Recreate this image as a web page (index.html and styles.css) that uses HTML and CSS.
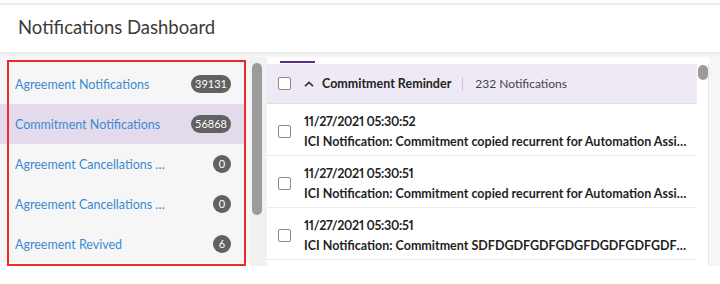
FILE: index.html
```html
<!DOCTYPE html>
<html lang="en">
<head>
  <meta charset="UTF-8" />
  <title>Notifications Dashboard</title>
  <link rel="stylesheet" href="styles.css">
</head>
<body>
  <div class="topline"></div>
  <header class="page-header">
    <h1>Notifications Dashboard</h1>
  </header>
  <div class="divider"></div>

  <main class="main">
    <aside class="side">
      <ul class="cat-list">
        <li class="cat"><span class="cat-name">Agreement Notifications</span><span class="badge wide">39131</span></li>
        <li class="cat active"><span class="cat-name">Commitment Notifications</span><span class="badge wide">56868</span></li>
        <li class="cat"><span class="cat-name">Agreement Cancellations Notifications</span><span class="badge">0</span></li>
        <li class="cat"><span class="cat-name">Agreement Cancellations Reminder</span><span class="badge">0</span></li>
        <li class="cat"><span class="cat-name">Agreement Revived</span><span class="badge">6</span></li>
      </ul>
      <div class="highlight"></div>
    </aside>

    <div class="side-scroll"><div class="thumb side-thumb"></div></div>

    <section class="content">
      <div class="tab-mark"></div>
      <div class="list-wrap">
        <div class="list">
          <div class="group-head">
            <span class="check"></span>
            <svg class="chev" width="10" height="6" viewBox="0 0 10 6"><path d="M1 5.2 L5 1.4 L9 5.2" fill="none" stroke="#333" stroke-width="1.6"/></svg>
            <span class="group-title">Commitment Reminder</span>
            <span class="sep"></span>
            <span class="group-count">232 Notifications</span>
          </div>
          <div class="row">
            <span class="check"></span>
            <div class="row-text">
              <div class="row-date">11/27/2021 05:30:52</div>
              <div class="row-title">ICI Notification: Commitment copied recurrent for Automation Assignment Test</div>
            </div>
          </div>
          <div class="row">
            <span class="check"></span>
            <div class="row-text">
              <div class="row-date">11/27/2021 05:30:51</div>
              <div class="row-title">ICI Notification: Commitment copied recurrent for Automation Assignment Test</div>
            </div>
          </div>
          <div class="row">
            <span class="check"></span>
            <div class="row-text">
              <div class="row-date">11/27/2021 05:30:51</div>
              <div class="row-title">ICI Notification: Commitment SDFDGDFGDFGDGFDGDFGDFGDFGDFGFDGFDGDFG</div>
            </div>
          </div>
        </div>
        <div class="list-scroll"><div class="thumb list-thumb"></div></div>
      </div>
    </section>
    <div class="gutter"></div>
  </main>
</body>
</html>
```

FILE: styles.css
```css
body {
  margin: 0;
  font-family: 'Lato', sans-serif;
  background: #fff;
  color: #333;
}
.topline {
  height: 2px;
  margin-top: 3px;
  background: #ebebeb;
}
.page-header {
  height: 47px;
  display: flex;
  align-items: center;
  padding: 0 0 3px 18px;
  box-sizing: border-box;
}
.page-header h1 {
  margin: 0;
  font-size: 18.5px;
  font-weight: 400;
  color: #3a3a3a;
}
.divider {
  height: 5px;
  background: linear-gradient(#ececec, #f7f7f7);
}
.main {
  display: flex;
  height: 209px;
}
.side {
  position: relative;
  width: 250px;
  height: 206px;
  background: #f6f6f6;
}
.cat-list {
  list-style: none;
  margin: 7px 0 0;
  padding: 0;
}
.cat {
  height: 40px;
  display: flex;
  align-items: center;
  justify-content: space-between;
  padding: 0 14px 0 15px;
  width: 216px;
}
.cat.active {
  background: #e3dbec;
}
.cat-name {
  font-size: 12.5px;
  color: #3c8ad0;
  white-space: nowrap;
  overflow: hidden;
  text-overflow: ellipsis;
  max-width: 152px;
}
.badge {
  background: #616161;
  color: #fff;
  font-size: 11px;
  height: 18px;
  line-height: 18px;
  min-width: 16px;
  padding: 0 1px;
  border-radius: 9px;
  text-align: center;
  flex-shrink: 0;
}
.badge.wide {
  padding: 0 4px;
}
.highlight {
  position: absolute;
  left: 7px;
  top: 3px;
  width: 235px;
  height: 202px;
  border: 2px solid #ee2a2a;
  pointer-events: none;
}
.side-scroll {
  width: 15px;
  background: #f1f1f1;
  padding: 6px 0 0 2px;
}
.thumb {
  background: #9b9b9b;
  border-radius: 5px;
  width: 10px;
}
.side-thumb {
  height: 152px;
}
.content {
  width: 442px;
  padding-top: 4px;
}
.tab-mark {
  width: 35px;
  height: 2px;
  margin-left: 13px;
  background: #5b2d8e;
}
.list-wrap {
  display: flex;
  margin-top: 1px;
  height: 202px;
}
.list {
  width: 430px;
  overflow: hidden;
}
.group-head {
  height: 39px;
  background: #efe9f6;
  border-bottom: 1px solid #e2daea;
  display: flex;
  align-items: center;
  padding-left: 11px;
}
.check {
  width: 11px;
  height: 11px;
  border: 1.5px solid #8a8a8a;
  border-radius: 2px;
  background: #fff;
  flex-shrink: 0;
}
.chev {
  margin-left: 13px;
}
.group-title {
  margin-left: 8px;
  font-size: 12.5px;
  font-weight: 700;
  color: #222;
}
.sep {
  width: 1px;
  height: 14px;
  background: #cbbfdb;
  margin: 0 12px 0 11px;
}
.group-count {
  font-size: 12px;
  color: #444;
}
.row {
  height: 51px;
  border-bottom: 1px solid #ececec;
  display: flex;
  align-items: center;
  padding-left: 11px;
  background: #fff;
}
.row .check {
  margin-top: 3px;
}
.row-text {
  margin-left: 13px;
  min-width: 0;
  flex: 1;
  padding: 3px 8px 0 0;
}
.row-date,
.row-title {
  font-size: 12.5px;
  font-weight: 700;
  color: #1f1f1f;
  white-space: nowrap;
  overflow: hidden;
  text-overflow: ellipsis;
}
.row-date {
  margin-bottom: 5px;
  font-variant-numeric: proportional-nums;
  letter-spacing: -0.3px;
}
.list-scroll {
  width: 11px;
  background: #fff;
  border-right: 1px solid #e6e6e6;
  padding-top: 1px;
}
.list-thumb {
  height: 15px;
  width: 10px;
  margin-left: 1px;
}
.gutter {
  flex: 1;
  background: #f6f6f6;
}
```
